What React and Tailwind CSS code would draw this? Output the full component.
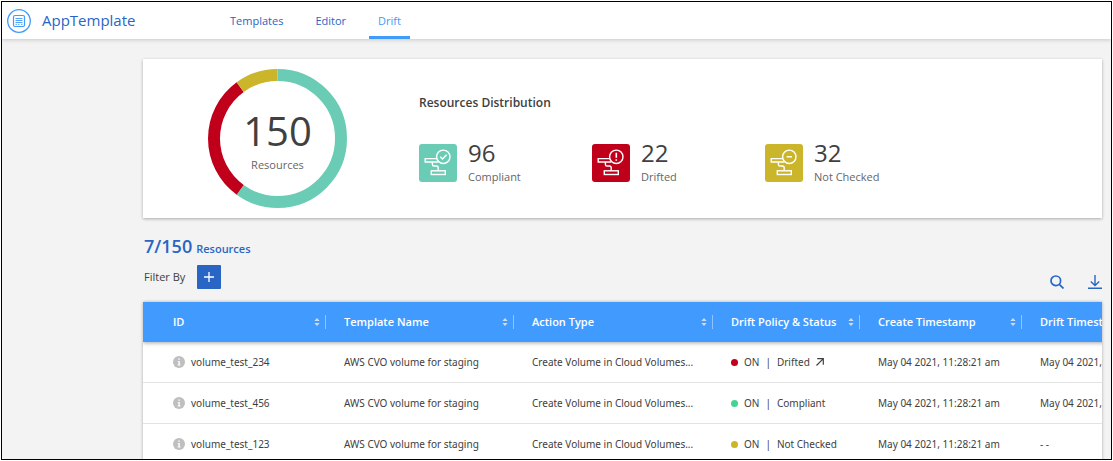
import React from "react";

const segments = [
  { color: "#6accb5", start: 0, size: 60 },
  { color: "#c0001b", start: 60, size: 30 },
  { color: "#cbb52b", start: 90, size: 10 },
];

const stats = [
  { value: 96, label: "Compliant", tile: "bg-[#6accb5]", mark: "check" },
  { value: 22, label: "Drifted", tile: "bg-[#c0001b]", mark: "alert" },
  { value: 32, label: "Not Checked", tile: "bg-[#cbb52b]", mark: "minus" },
];

const columns = [
  { name: "ID", width: "w-[183px]" },
  { name: "Template Name", width: "w-[188px]" },
  { name: "Action Type", width: "w-[199px]" },
  { name: "Drift Policy & Status", width: "w-[147px]" },
  { name: "Create Timestamp", width: "w-[162px]" },
  { name: "Drift Timestamp", width: "w-[162px]" },
];

const rows = [
  { id: "volume_test_234", status: "Drifted", dot: "bg-[#c0001b]", link: true, drift: "May 04 2021, 11:28:21 am" },
  { id: "volume_test_456", status: "Compliant", dot: "bg-[#44d492]", drift: "May 04 2021, 11:28:21 am" },
  { id: "volume_test_123", status: "Not Checked", dot: "bg-[#cbb52b]", drift: "- -" },
];

function Logo() {
  return (
    <svg className="size-6" viewBox="0 0 24 24" fill="none" stroke="#419bf9" aria-hidden="true">
      <circle cx="12" cy="12" r="11.3" strokeWidth="1.3" />
      <rect x="6.5" y="6.5" width="11" height="11" rx="1.5" strokeWidth="1.2" />
      <path d="M8.5 9.5h7M8.5 11.5h7M8.5 13.5h7M8.5 15.3h1.5M11 15.3h1.5M14 15.3h1.5" strokeWidth="0.9" />
    </svg>
  );
}

function Donut() {
  return (
    <div className="relative size-[139px] shrink-0">
      <svg className="size-full -rotate-90" viewBox="0 0 139 139" fill="none" aria-hidden="true">
        {segments.map((s) => (
          <circle
            key={s.color}
            cx="69.5"
            cy="69.5"
            r="63.5"
            stroke={s.color}
            strokeWidth="12"
            pathLength="100"
            strokeDasharray={`${s.size} ${100 - s.size}`}
            strokeDashoffset={-s.start}
          />
        ))}
      </svg>
      <div className="absolute inset-0 flex flex-col items-center justify-center pt-1">
        <span className="text-[40px] leading-[44px] text-[#404040]">150</span>
        <span className="mt-1 text-[11px] leading-4 font-medium text-[#666]">Resources</span>
      </div>
    </div>
  );
}

function StatIcon({ mark }) {
  return (
    <svg className="size-[38px]" viewBox="0 0 38 38" fill="none" stroke="#fff" strokeWidth="1.4" aria-hidden="true">
      <circle cx="24.3" cy="12.8" r="6.7" />
      <path d="M17.8 14.6H6.2v3.4h13.2M13.4 18v2.4q0 1.6 1.6 1.6h2.4q1.8 0 1.8 1.8v3" />
      <rect x="12.3" y="26.8" width="14" height="3.7" />
      {mark === "check" && <path d="M21.3 12.8l2.2 2.2 4.1-4.2" />}
      {mark === "alert" && <path d="M24.3 8.8v5M24.3 15.2v1.6" strokeWidth="1.6" />}
      {mark === "minus" && <path d="M21.6 12.8h5.4" />}
    </svg>
  );
}

function SortIcon() {
  return (
    <svg className="h-2 w-[6px]" viewBox="0 0 6 8" fill="#d5dde8" aria-hidden="true">
      <path d="M3 0l2.6 3H.4zM3 8L.4 5h5.2z" />
    </svg>
  );
}

function InfoIcon() {
  return (
    <svg className="size-3 shrink-0" viewBox="0 0 12 12" aria-hidden="true">
      <circle cx="6" cy="6" r="6" fill="#bfbfbf" />
      <path d="M5.3 2.4h1.5v1.4H5.3zM4.7 4.9h2.1v3.6h.7v.9H4.6v-.9h.8V5.8h-.7z" fill="#fff" />
    </svg>
  );
}

export default function App() {
  return (
    <div className="h-screen bg-white p-px font-['Open_Sans',sans-serif] text-[#404040]">
      <div className="flex h-full flex-col overflow-hidden border border-black bg-[#f3f3f3]">
        <header className="relative flex h-[37px] shrink-0 items-stretch bg-white pl-[5px] shadow-[0_1px_4px_rgba(0,0,0,0.18)]">
          <div className="flex w-[214px] items-center gap-[11px]">
            <Logo />
            <span className="text-[15px] text-[#2965c5]">AppTemplate</span>
          </div>
          <nav className="flex gap-[14px] text-[11px] font-medium text-[#2965c5]">
            <a href="#templates" className="flex items-center px-[9px] pt-[2px]">Templates</a>
            <a href="#editor" className="flex items-center px-[9px] pt-[2px]">Editor</a>
            <a href="#drift" aria-current="page" className="flex items-center border-b-3 border-[#419bf9] px-[9px] pt-[5px] text-[#419bf9]">Drift</a>
          </nav>
        </header>

        <main className="pt-5 pr-[9px] pl-[141px]">
          <section className="flex items-center bg-white py-[10px] pl-[65px] shadow-[0_1px_3px_rgba(0,0,0,0.3)]">
            <Donut />
            <div className="ml-[72px] flex-1 pt-[2px]">
              <h2 className="text-xs leading-4 font-semibold">Resources Distribution</h2>
              <ul className="mt-7 flex">
                {stats.map((s) => (
                  <li key={s.label} className="flex w-[173px] items-center gap-[11px]">
                    <span className={`mt-[2px] rounded-[3px] ${s.tile}`}>
                      <StatIcon mark={s.mark} />
                    </span>
                    <span className="flex flex-col">
                      <span className="text-2xl leading-7">{s.value}</span>
                      <span className="mt-[2px] text-[11px] leading-4 font-medium text-[#666]">{s.label}</span>
                    </span>
                  </li>
                ))}
              </ul>
            </div>
          </section>

          <div className="mt-4 flex items-end justify-between">
            <div className="pl-px">
              <p className="flex items-baseline gap-1 font-semibold text-[#2965c5]">
                <span className="text-lg leading-6">7/150</span>
                <span className="text-[11px]">Resources</span>
              </p>
              <div className="mt-[7px] flex items-center gap-3">
                <span className="text-[11px] font-medium">Filter By</span>
                <button type="button" aria-label="Add filter" className="flex size-6 items-center justify-center rounded-[1px] bg-[#2965c5]">
                  <svg className="size-3" viewBox="0 0 12 12" stroke="#fff" strokeWidth="1.3" aria-hidden="true">
                    <path d="M6 1v10M1 6h10" />
                  </svg>
                </button>
              </div>
            </div>
            <div className="flex gap-6">
              <button type="button" aria-label="Search">
                <svg className="size-[14px]" viewBox="0 0 14 14" fill="none" stroke="#2965c5" strokeWidth="1.7" aria-hidden="true">
                  <circle cx="5.8" cy="5.8" r="4.8" />
                  <path d="M9.3 9.3l4.2 4.2" />
                </svg>
              </button>
              <button type="button" aria-label="Download">
                <svg className="size-[14px]" viewBox="0 0 14 14" fill="none" stroke="#2965c5" strokeWidth="1.4" aria-hidden="true">
                  <path d="M7 0v10.5M2.8 6.6L7 10.6l4.2-4M0 13.3h14" />
                </svg>
              </button>
            </div>
          </div>

          <div className="mt-[13px] overflow-hidden bg-white shadow-[0_0_3px_rgba(0,0,0,0.3)]">
            <table className="w-[1041px] table-fixed border-separate border-spacing-0 text-left font-['Noto_Sans',sans-serif] text-[10px] whitespace-nowrap">
              <thead className="relative bg-[#419bff] font-['Open_Sans',sans-serif] text-[11px] text-white shadow-[0_1px_4px_rgba(0,0,0,0.35)]">
                <tr className="h-10">
                  {columns.map((c, i) => (
                    <th key={c.name} scope="col" className={`p-0 font-semibold ${c.width}`}>
                      <div className={`flex h-[14px] items-center justify-between border-r border-[#8fc4ff] pr-[5px] ${i === 0 ? "pl-[30px]" : "pl-[18px]"}`}>
                        {c.name}
                        <SortIcon />
                      </div>
                    </th>
                  ))}
                </tr>
              </thead>
              <tbody className="[&_td]:border-b [&_td]:border-[#e3e3e3]">
                {rows.map((r) => (
                  <tr key={r.id} className="h-[41px]">
                    <td className="p-0 pl-[30px]">
                      <span className="flex items-center gap-[6px]">
                        <InfoIcon />
                        {r.id}
                      </span>
                    </td>
                    <td className="p-0 pl-[18px]">AWS CVO volume for staging</td>
                    <td className="p-0 pl-[18px]">Create Volume in Cloud Volumes...</td>
                    <td className="p-0 pl-[18px]">
                      <span className="flex items-center gap-[6px]">
                        <span className={`size-[7px] rounded-full ${r.dot}`} />
                        <span>ON</span>
                        <span>|</span>
                        <span>{r.status}</span>
                        {r.link && (
                          <svg className="size-2" viewBox="0 0 8 8" fill="none" stroke="#404040" strokeWidth="1.2" aria-hidden="true">
                            <path d="M.5 7.5l6.8-6.8M1.2.7h6.1v6.1" />
                          </svg>
                        )}
                      </span>
                    </td>
                    <td className="p-0 pl-[18px]">May 04 2021, 11:28:21 am</td>
                    <td className="p-0 pl-[18px]">{r.drift}</td>
                  </tr>
                ))}
              </tbody>
            </table>
          </div>
        </main>
      </div>
    </div>
  );
}
